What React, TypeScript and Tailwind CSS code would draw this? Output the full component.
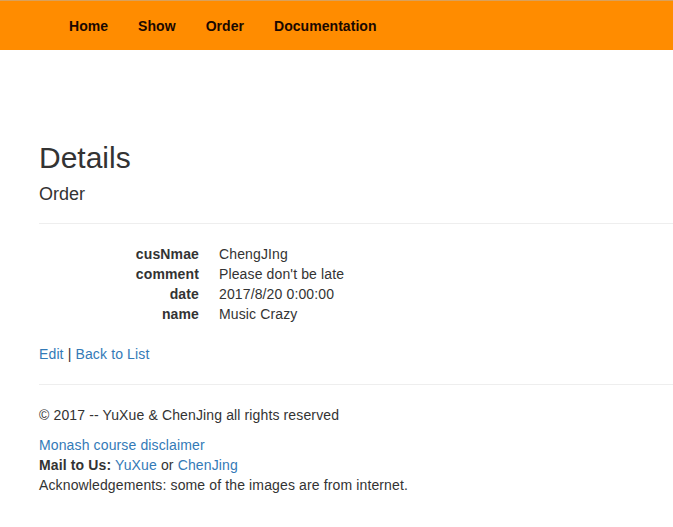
export default function App() {
  const details = [
    { label: 'cusNmae', value: 'ChengJIng' },
    { label: 'comment', value: "Please don't be late" },
    { label: 'date', value: '2017/8/20 0:00:00' },
    { label: 'name', value: 'Music Crazy' },
  ]

  return (
    <div className="min-h-screen bg-white text-[14px] leading-[20px] tracking-[0.13px] text-[#333] font-['Liberation_Sans',Arial,sans-serif] overflow-hidden">
      {/* Navbar */}
      <nav className="h-[50px] bg-[#ff8c00] border-t border-[#d9a15c]">
        <ul className="flex pl-[54px]">
          {['Home', 'Show', 'Order', 'Documentation'].map((item) => (
            <li key={item}>
              <a href="#" className="block px-[15px] pt-[15px] pb-[14px] font-bold tracking-[0.05px] text-[#1a0800]">
                {item}
              </a>
            </li>
          ))}
        </ul>
      </nav>

      <div className="pl-[39px]">
        <h2 className="mt-[91px] mb-[10px] text-[30px] leading-[33px] tracking-normal font-normal">Details</h2>

        <div>
          <h4 className="text-[18px] leading-[20px] tracking-normal font-normal">Order</h4>
          <hr className="mt-[19px] mb-[20px] border-t border-[#eee]" />
          <dl className="mb-[20px]">
            {details.map((d) => (
              <div key={d.label} className="flex">
                <dt className="w-[160px] text-right font-bold">{d.label}</dt>
                <dd className="ml-[20px]">{d.value}</dd>
              </div>
            ))}
          </dl>
        </div>

        <p className="mb-[10px]">
          <a href="#" className="text-[#337ab7]">Edit</a> |{' '}
          <a href="#" className="text-[#337ab7]">Back to List</a>
        </p>

        <hr className="mt-[20px] mb-[20px] border-t border-[#eee]" />

        <footer>
          <p className="mb-[10px]">© 2017 -- YuXue &amp; ChenJing all rights reserved</p>
          <p>
            <a href="#" className="text-[#337ab7]">Monash course disclaimer</a>
          </p>
          <p>
            <b>Mail to Us:</b> <a href="#" className="text-[#337ab7]">YuXue</a> or{' '}
            <a href="#" className="text-[#337ab7]">ChenJing</a>
          </p>
          <p>Acknowledgements: some of the images are from internet.</p>
        </footer>
      </div>
    </div>
  )
}
